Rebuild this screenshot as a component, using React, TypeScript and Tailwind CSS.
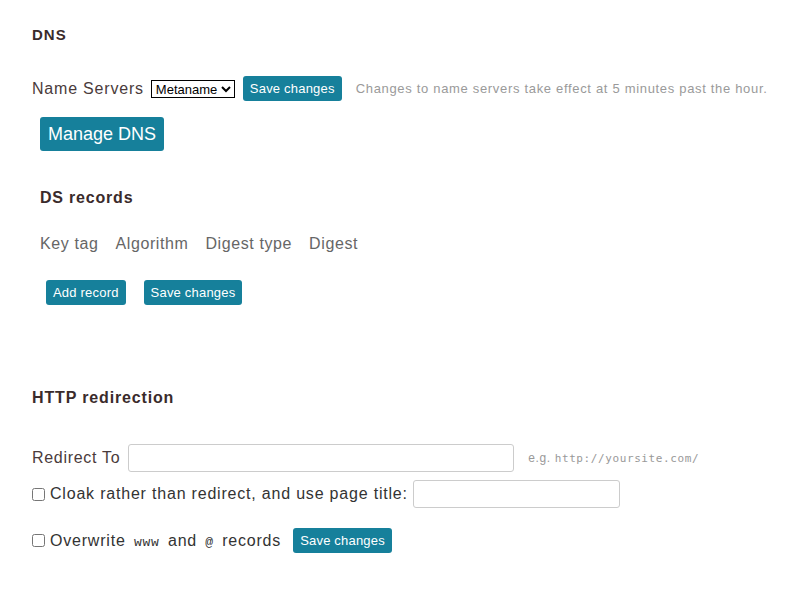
import { useState } from 'react';

const btn =
  'rounded-[3px] bg-[#16809b] px-[7px] text-[13px] leading-[25px] text-white tracking-[0.2px]';

export default function App() {
  const [ns, setNs] = useState('Metaname');

  return (
    <div className="min-h-screen bg-white pl-8 pt-[26px] font-['Liberation_Sans',Arial,sans-serif] text-[#3a2b2b]">
      <h2 className="text-[15px] font-bold leading-[18px] tracking-[1px]">DNS</h2>

      <div className="mt-[32px] flex items-center">
        <span className="text-[16px] tracking-[0.8px] text-[#4a3b3b]">Name Servers</span>
        <select
          value={ns}
          onChange={(e) => setNs(e.target.value)}
          className="ml-[7px] h-[18px] w-[84px] border border-black text-[13px] text-black"
        >
          <option>Metaname</option>
          <option>Custom</option>
        </select>
        <button className={`${btn} ml-2`}>Save changes</button>
        <span className="ml-[14px] text-[13px] tracking-[0.68px] text-[#9a9a9a]">
          Changes to name servers take effect at 5 minutes past the hour.
        </span>
      </div>

      <button className="ml-2 mt-[16px] rounded-[3px] bg-[#16809b] px-[8px] text-[18px] leading-[34px] text-white">
        Manage DNS
      </button>

      <div className="pl-2">
        <h3 className="mt-[38px] text-[16px] font-bold leading-[18px] tracking-[0.8px]">DS records</h3>
        <div className="mt-[25px] flex gap-[17px] text-[16px] tracking-[0.6px] text-[#666]">
          <span>Key tag</span>
          <span>Algorithm</span>
          <span>Digest type</span>
          <span>Digest</span>
        </div>
        <div className="mt-[24px] flex gap-[18px] pl-[6px]">
          <button className={btn}>Add record</button>
          <button className={btn}>Save changes</button>
        </div>
      </div>

      <h3 className="mt-[84px] text-[16px] font-bold leading-[18px] tracking-[0.85px]">HTTP redirection</h3>

      <div className="mt-[37px] flex items-center">
        <span className="text-[16px] tracking-[0.7px] text-[#4a3b3b]">Redirect To</span>
        <input className="ml-[8px] h-[28px] w-[386px] rounded-[3px] border border-[#ccc]" />
        <span className="ml-[14px] text-[12px] tracking-[0.6px] text-[#999]">
          e.g. <code className="font-['DejaVu_Sans_Mono',monospace] text-[11px]">http://yoursite.com/</code>
        </span>
      </div>

      <div className="mt-[8px] flex items-center">
        <input type="checkbox" className="h-[13px] w-[13px]" />
        <span className="ml-[5px] text-[16px] tracking-[0.8px] text-[#333]">
          Cloak rather than redirect, and use page title:
        </span>
        <input className="ml-[5px] h-[28px] w-[207px] rounded-[3px] border border-[#ccc]" />
      </div>

      <div className="mt-[20px] flex items-center">
        <input type="checkbox" className="h-[13px] w-[13px]" />
        <span className="ml-[5px] text-[16px] tracking-[0.8px] text-[#333] [word-spacing:3px]">
          Overwrite <code className="font-['Liberation_Mono',monospace] text-[13px]">www</code> and{' '}
          <code className="font-['Liberation_Mono',monospace] text-[13px]">@</code> records
        </span>
        <button className={`${btn} ml-[12px]`}>Save changes</button>
      </div>
    </div>
  );
}
